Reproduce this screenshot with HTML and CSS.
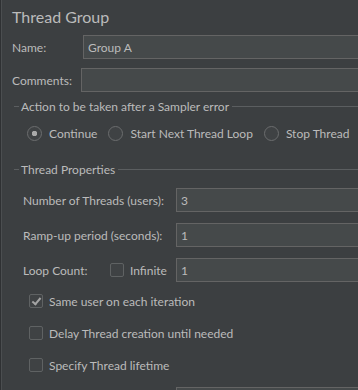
FILE: index.html
```html
<!DOCTYPE html>
<html lang="en">
<head>
  <meta charset="UTF-8">
  <meta name="viewport" content="width=device-width, initial-scale=1.0">
  <title>Thread Group</title>
  <link rel="stylesheet" href="styles.css">
</head>
<body>

  <div class="panel">
    <h1 class="title">Thread Group</h1>

    <div class="field-row name-row">
      <label for="name">Name:</label>
      <input id="name" type="text" value="Group A">
    </div>

    <div class="field-row comments-row">
      <label for="comments">Comments:</label>
      <input id="comments" type="text" value="">
    </div>

    <div class="group-title">Action to be taken after a Sampler error</div>
    <div class="radio-row">
      <span class="option"><span class="radio checked"></span>Continue</span>
      <span class="option"><span class="radio"></span>Start Next Thread Loop</span>
      <span class="option"><span class="radio"></span>Stop Thread</span>
      <span class="option"><span class="radio"></span></span>
    </div>

    <div class="group-title">Thread Properties</div>
    <div class="props">
      <div class="prop-row">
        <label class="prop-label" for="threads">Number of Threads (users):</label>
        <input id="threads" type="text" value="3">
      </div>
      <div class="prop-row">
        <label class="prop-label" for="rampup">Ramp-up period (seconds):</label>
        <input id="rampup" type="text" value="1">
      </div>
      <div class="prop-row">
        <div class="prop-label loop-label">
          <span class="loop-text">Loop Count:</span>
          <span class="check"></span>Infinite
        </div>
        <input id="loops" type="text" value="1">
      </div>

      <div class="check-row first-check"><span class="check checked"></span>Same user on each iteration</div>
      <div class="check-row"><span class="check"></span>Delay Thread creation until needed</div>
      <div class="check-row"><span class="check"></span>Specify Thread lifetime</div>

      <div class="prop-row last-row">
        <span class="prop-label"></span>
        <input type="text" value="">
      </div>
    </div>
  </div>

</body>
</html>
```

FILE: styles.css
```css
html, body {
  margin: 0;
  height: 100%;
  background-color: #3c3f41;
  overflow: hidden;
}

body {
  font-family: 'Lato', 'DejaVu Sans', sans-serif;
  font-size: 12px;
  color: #bbbbbb;
  border-left: 1px solid #2f3133;
}

.panel {
  border-left: 1px solid #4b4e50;
  height: 100%;
  padding-left: 10px;
}

.title {
  margin: 0;
  padding-top: 6px;
  height: 29px;
  font-size: 16px;
  font-weight: normal;
  line-height: 22px;
}

.field-row {
  display: flex;
  align-items: center;
  height: 24px;
  margin-right: -2px;
}

.name-row label {
  width: 71px;
}

.comments-row {
  margin-top: 9px;
}

.comments-row label {
  width: 69px;
}

input {
  flex: 1;
  box-sizing: border-box;
  height: 24px;
  min-width: 0;
  padding: 0 4px;
  font-family: inherit;
  font-size: 12px;
  color: #bbbbbb;
  background-color: #45494a;
  border: 1px solid #646464;
  outline: none;
}

.group-title {
  display: flex;
  align-items: center;
  height: 14px;
  margin-top: 7px;
  margin-left: 2px;
  white-space: nowrap;
}

.group-title::before {
  content: "";
  width: 5px;
  margin-right: 2px;
  border-top: 1px solid #5b5e60;
}

.group-title::after {
  content: "";
  flex: 1;
  margin-left: 3px;
  border-top: 1px solid #5b5e60;
}

.radio-row {
  display: flex;
  align-items: center;
  height: 24px;
  margin: 8px 0 17px 15px;
  white-space: nowrap;
}

.option {
  display: flex;
  align-items: center;
  margin-right: 11px;
}

.radio {
  box-sizing: border-box;
  width: 15px;
  height: 15px;
  margin-right: 7px;
  border: 1px solid #6b6d6e;
  border-radius: 50%;
  background-color: #3f4244;
  flex-shrink: 0;
}

.radio.checked {
  background: radial-gradient(circle, #a9a9a9 0 2.5px, #3f4244 3px);
}

.props {
  padding-left: 11px;
  padding-top: 1px;
}

.prop-row {
  display: flex;
  align-items: center;
  height: 24px;
  margin-top: 11px;
  margin-right: -2px;
}

.prop-label {
  width: 153px;
  flex-shrink: 0;
  white-space: nowrap;
}

.loop-label {
  display: flex;
  align-items: center;
}

.loop-text {
  width: 87px;
}

.check {
  box-sizing: border-box;
  display: inline-block;
  position: relative;
  width: 14px;
  height: 14px;
  margin-right: 6px;
  border: 1px solid #5f6263;
  border-radius: 2px;
  background-color: #3f4244;
  flex-shrink: 0;
}

.check.checked::after {
  content: "";
  position: absolute;
  left: 4px;
  top: 1px;
  width: 3px;
  height: 7px;
  border-right: 2px solid #a4a4a4;
  border-bottom: 2px solid #a4a4a4;
  transform: rotate(40deg);
}

.check-row {
  display: flex;
  align-items: center;
  height: 24px;
  margin-top: 8px;
  margin-left: 6px;
  white-space: nowrap;
}

.check-row .check {
  margin-right: 6px;
}

.check-row.first-check {
  margin-top: 7px;
}

.last-row {
  margin-top: 10px;
}
```
